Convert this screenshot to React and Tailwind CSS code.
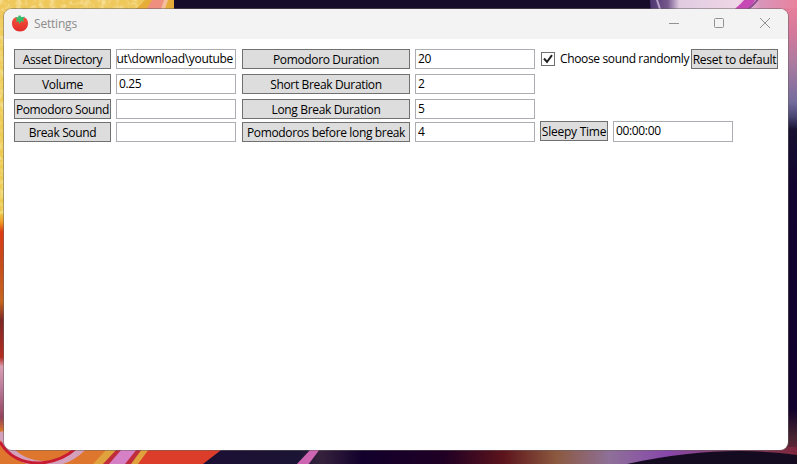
import React from "react";

const font = "font-['Open_Sans','Noto_Sans',sans-serif]";

function Wallpaper() {
  return (
    <svg className="absolute inset-0" width="797" height="464" viewBox="0 0 797 464" aria-hidden="true">
      <defs>
        <linearGradient id="left" x1="0" y1="0" x2="0" y2="464" gradientUnits="userSpaceOnUse">
          <stop offset="0" stopColor="#f0cf60" />
          <stop offset=".46" stopColor="#edc94c" />
          <stop offset=".48" stopColor="#ef941f" />
          <stop offset=".5" stopColor="#dc3a15" />
          <stop offset=".56" stopColor="#c84a1c" />
          <stop offset=".65" stopColor="#c4651e" />
          <stop offset=".69" stopColor="#7c2826" />
          <stop offset=".77" stopColor="#b52c20" />
          <stop offset=".79" stopColor="#d9a0b4" />
          <stop offset=".84" stopColor="#b87898" />
          <stop offset=".9" stopColor="#93435c" />
          <stop offset=".93" stopColor="#dc7a28" />
          <stop offset="1" stopColor="#e37a2c" />
        </linearGradient>
        <linearGradient id="topRight" x1="650" y1="0" x2="797" y2="0" gradientUnits="userSpaceOnUse">
          <stop offset="0" stopColor="#4d3471" />
          <stop offset=".12" stopColor="#75598d" />
          <stop offset=".2" stopColor="#e0cbe1" />
          <stop offset=".6" stopColor="#f0d6e6" />
          <stop offset=".75" stopColor="#d995bb" />
          <stop offset="1" stopColor="#e9829c" />
        </linearGradient>
        <linearGradient id="right" x1="0" y1="0" x2="0" y2="464" gradientUnits="userSpaceOnUse">
          <stop offset="0" stopColor="#eb829b" />
          <stop offset=".07" stopColor="#d4789b" />
          <stop offset=".14" stopColor="#a97ba0" />
          <stop offset=".22" stopColor="#746c9d" />
          <stop offset=".25" stopColor="#4b4875" />
          <stop offset=".28" stopColor="#17102f" />
          <stop offset=".4" stopColor="#12042f" />
          <stop offset=".88" stopColor="#10002b" />
          <stop offset=".94" stopColor="#45232f" />
          <stop offset="1" stopColor="#802741" />
        </linearGradient>
        <linearGradient id="bottom" x1="210" y1="0" x2="797" y2="0" gradientUnits="userSpaceOnUse">
          <stop offset="0" stopColor="#1b1034" />
          <stop offset=".15" stopColor="#1c1434" />
          <stop offset=".19" stopColor="#35213c" />
          <stop offset=".26" stopColor="#12002c" />
          <stop offset=".4" stopColor="#200024" />
          <stop offset=".5" stopColor="#5c141c" />
          <stop offset=".59" stopColor="#8c593f" />
          <stop offset=".68" stopColor="#8e7098" />
          <stop offset=".78" stopColor="#8847ab" />
          <stop offset=".88" stopColor="#884169" />
          <stop offset="1" stopColor="#7c263c" />
        </linearGradient>
        <filter id="grain" x="0" y="0" width="100%" height="100%">
          <feTurbulence type="fractalNoise" baseFrequency=".18" numOctaves="3" seed="4" />
          <feColorMatrix values="0 0 0 0 1  0 0 0 0 .92  0 0 0 0 .6  1.4 0 0 0 -.6" />
        </filter>
      </defs>
      <rect width="797" height="464" fill="#170d2b" />
      <rect width="10" height="464" fill="url(#left)" />
      <path d="M0 0H173V20H0Z" fill="#efc85c" />
      <path d="M0 0H173V20H10V220H0Z" filter="url(#grain)" />
      <path d="M133 12L145 0H174V12Z" fill="#e6ae38" />
      <path d="M145 12L152 0H166L161 12Z" fill="#ef8f80" />
      <path d="M160 12L164 0H168L164 12Z" fill="#f4bd9c" />
      <path d="M650 0H797V30H652Z" fill="url(#topRight)" />
      <path d="M657 0L661 12" stroke="#b8a2cb" strokeWidth="2" />
      <path d="M738 12Q747 5 751-2" stroke="#c648b5" strokeWidth="9" fill="none" />
      <path d="M745 12Q754 5 759-2" stroke="#8c4c92" strokeWidth="2" fill="none" />
      <rect x="784" y="8" width="13" height="456" fill="url(#right)" />
      <path d="M0 437H222L205 464H0Z" fill="#df762d" />
      <path d="M0 432Q9 457 34 463Q62 468 83 448" stroke="#d4a1bd" strokeWidth="6" fill="none" />
      <path d="M0 442Q13 464 41 463Q62 461 75 449" stroke="#c91c32" strokeWidth="3" fill="none" />
      <path d="M134 449H225L204 464H134Z" fill="#dc3c2a" />
      <path d="M93 464L107 449H149L138 464Z" fill="#dfa23c" />
      <path d="M103 464L117 449H142L131 464Z" fill="#c12c3c" />
      <path d="M109 464L122 449H137L125 464Z" fill="#d681c6" />
      <path d="M203 464L225 447H797V464Z" fill="url(#bottom)" />
      <path d="M296 465L311 449H320L308 465Z" fill="#cd65b3" />
      <path d="M627 464Q720 444 797 455V464Z" fill="#140b20" />
    </svg>
  );
}

function Tomato() {
  return (
    <svg width="18" height="18" viewBox="0 0 18 18" className="shrink-0">
      <defs>
        <linearGradient id="skin" x1="0" y1="0" x2="0" y2="1">
          <stop offset="0" stopColor="#f5513b" />
          <stop offset="1" stopColor="#e02e2b" />
        </linearGradient>
      </defs>
      <path d="M9 3C4 1 1 4 1 8.5C1 13 4.5 16.5 9 16.5S17 13 17 8.5C17 4 14 1 9 3Z" fill="url(#skin)" />
      <path d="M4 2.2L7.4 2.4L7.2 .7L9.6 .4L10 2L14 1.8L12 4.2L13 7L10.3 6L8.5 9L7.2 6L4.8 7.2L6 4.3Z" fill="#35bd6b" />
    </svg>
  );
}

function Button({ children, box = "", text = "tracking-[-0.35px]" }) {
  return (
    <button className={`flex h-5 items-center justify-center border border-[#707070] bg-[#dddddd] text-[12px] leading-[18px] whitespace-nowrap ${box}`}>
      <span className={`relative top-px ${text}`}>{children}</span>
    </button>
  );
}

function Field({ children, box = "h-5 pl-[2px]", text = "tracking-[-0.35px]" }) {
  return (
    <div className={`flex w-[120px] overflow-hidden border border-[#abadb3] bg-white text-[12px] leading-[18px] whitespace-nowrap ${box}`}>
      <span className={text}>{children}</span>
    </div>
  );
}

export default function App() {
  return (
    <div className={`relative h-[464px] w-[797px] overflow-hidden pt-[9px] pl-1 text-black ${font}`}>
      <Wallpaper />
      <main className="relative flex h-[441px] w-[784px] flex-col overflow-hidden rounded-lg bg-white shadow-[0_0_0_1px_#65606080]">
        <header className="flex h-[30px] shrink-0 items-center bg-[#f3f3f3] pl-[7px]">
          <Tomato />
          <span className="ml-[5px] text-[12px] tracking-[-0.2px] text-[#8c8c8c]">Settings</span>
          <svg className="ml-auto" width="122" height="30" viewBox="0 0 122 30" fill="none" stroke="#929292">
            <path d="M3 14.5H13" />
            <rect x="48.5" y="9.5" width="9" height="9" rx="1" />
            <path d="M94 9L104 19M104 9L94 19" />
          </svg>
        </header>
        <section className="flex pt-[10px] pl-[10px]">
          <div className="flex w-[97px] flex-col gap-[5px]">
            <Button>Asset Directory</Button>
            <Button text="tracking-[-0.25px]">Volume</Button>
            <Button text="tracking-[-0.38px]">Pomodoro Sound</Button>
            <Button box="-mt-[2px]">Break Sound</Button>
          </div>
          <div className="ml-[5px] flex flex-col gap-[5px]">
            <Field box="h-5 justify-end pr-[2px]" text="tracking-[-0.3px]">ut\download\youtube</Field>
            <Field>0.25</Field>
            <Field />
            <Field box="h-5 -mt-[2px]" />
          </div>
          <div className="ml-[6px] flex w-[168px] flex-col gap-[5px]">
            <Button>Pomodoro Duration</Button>
            <Button>Short Break Duration</Button>
            <Button>Long Break Duration</Button>
            <Button box="-mt-[2px]">Pomodoros before long break</Button>
          </div>
          <div className="ml-[5px] flex flex-col gap-[5px]">
            <Field>20</Field>
            <Field>2</Field>
            <Field>5</Field>
            <Field box="h-5 pl-[2px] -mt-[2px]">4</Field>
          </div>
          <div className="ml-[5px] flex w-[238px] flex-col">
            <div className="flex h-5 items-center">
              <label className="flex w-[151px] items-center pl-px">
                <svg width="14" height="14" viewBox="0 0 14 14" className="shrink-0">
                  <rect x=".5" y=".5" width="13" height="13" fill="white" stroke="#707070" />
                  <path d="M3 6.5L6 10L11 3.2" fill="none" stroke="#212121" strokeWidth="2" />
                </svg>
                <span className="ml-[5px] text-[12px] leading-[18px] tracking-[-0.36px] whitespace-nowrap">Choose sound randomly</span>
              </label>
              <Button box="w-[87px]" text="tracking-[-0.28px]">Reset to default</Button>
            </div>
            <div className="mt-[52px] flex gap-[5px]">
              <Button box="w-[68px]" text="tracking-[-0.25px]">Sleepy Time</Button>
              <Field box="h-[21px] pl-[2px]">00:00:00</Field>
            </div>
          </div>
        </section>
      </main>
    </div>
  );
}
